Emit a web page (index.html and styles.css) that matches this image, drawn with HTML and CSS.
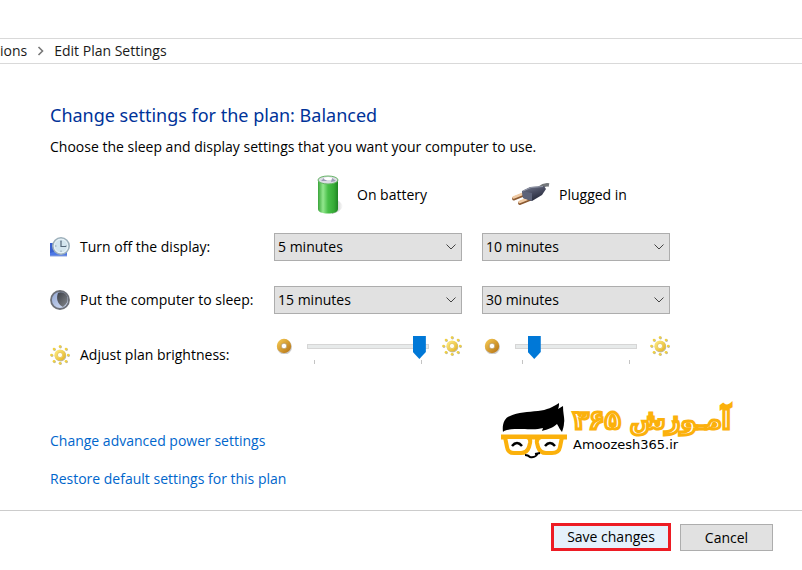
FILE: index.html
```html
<!DOCTYPE html>
<html lang="en">
<head>
  <meta charset="utf-8">
  <meta name="viewport" content="width=device-width, initial-scale=1">
  <title>Edit Plan Settings</title>
  <link rel="stylesheet" href="styles.css">
</head>
<body>

  <!-- shared drawings -->
  <svg class="defs" width="0" height="0" aria-hidden="true">
    <defs>
      <linearGradient id="gold" x1="0" y1="0" x2="1" y2="1">
        <stop offset="0" stop-color="#efc04c"/>
        <stop offset="1" stop-color="#bd7d1c"/>
      </linearGradient>
      <linearGradient id="yellow" x1="0" y1="0" x2="1" y2="1">
        <stop offset="0" stop-color="#fff08c"/>
        <stop offset="1" stop-color="#e3b01c"/>
      </linearGradient>
      <symbol id="dim" viewBox="0 0 16 16">
        <circle cx="8.5" cy="9" r="5.5" fill="none" stroke="#ccc" stroke-width="4"/>
        <circle cx="8" cy="8" r="5" fill="#fff" stroke="url(#gold)" stroke-width="4.4"/>
        <circle cx="8" cy="8" r="2.8" fill="#fff" stroke="#a8823c" stroke-width=".7"/>
      </symbol>
      <symbol id="sun" viewBox="0 0 20 20">
        <g fill="#b9b5a6">
          <circle cx="10.500" cy="2" r="1.400"/><circle cx="10.500" cy="18.600" r="1.400"/>
          <circle cx="2" cy="10.600" r="1.400"/><circle cx="18.600" cy="10.600" r="1.400"/>
          <circle cx="4.500" cy="4.600" r="1.400"/><circle cx="16.600" cy="4.600" r="1.400"/>
          <circle cx="4.500" cy="16.800" r="1.400"/><circle cx="16.600" cy="16.800" r="1.400"/>
        </g>
        <g fill="#f0d040">
          <circle cx="10" cy="1.500" r="1.300"/><circle cx="10" cy="18.200" r="1.300"/>
          <circle cx="1.500" cy="10" r="1.300"/><circle cx="18.200" cy="10" r="1.300"/>
          <circle cx="4" cy="4" r="1.300"/><circle cx="16" cy="4" r="1.300"/>
          <circle cx="4" cy="16.200" r="1.300"/><circle cx="16" cy="16.200" r="1.300"/>
        </g>
        <circle cx="10.500" cy="10.700" r="5.800" fill="#bfb9a4"/>
        <circle cx="10" cy="10" r="5.600" fill="url(#yellow)"/>
        <circle cx="10" cy="10" r="2.600" fill="#fffef4" stroke="#e2c258" stroke-width=".8"/>
      </symbol>
    </defs>
  </svg>

  <nav class="breadcrumb">
    <a href="#" class="crumb crumb-parent">ions</a>
    <svg class="crumb-arrow" width="7" height="10" viewBox="0 0 7 10"><path d="M1.5 1l4 4-4 4" fill="none" stroke="#777" stroke-width="1.6"/></svg>
    <span class="crumb">Edit Plan Settings</span>
  </nav>

  <main>
    <h1>Change settings for the plan: Balanced</h1>
    <p class="intro">Choose the sleep and display settings that you want your computer to use.</p>

    <form class="plan" id="plan">
      <div class="source source-battery">
        <svg width="32" height="40" viewBox="0 0 32 40">
          <defs>
            <linearGradient id="cell" x1="0" x2="1">
              <stop offset="0" stop-color="#3aa53a"/>
              <stop offset=".25" stop-color="#93e78e"/>
              <stop offset=".5" stop-color="#48bf48"/>
              <stop offset=".8" stop-color="#35aa35"/>
              <stop offset="1" stop-color="#1f8423"/>
            </linearGradient>
            <linearGradient id="shade" x1="0" x2="1">
              <stop offset="0" stop-color="#aaa"/>
              <stop offset="1" stop-color="#fff"/>
            </linearGradient>
          </defs>
          <path d="M20 24q7 2 9 7-1 5-11 8z" fill="url(#shade)"/>
          <path d="M4 5v29c0 3 4 4.500 10 4.500s10-1.500 10-4.500V5z" fill="url(#cell)"/>
          <ellipse cx="14" cy="5" rx="10" ry="4" fill="#dcdce4" stroke="#66b566"/>
          <path d="M7 6l3-3 3 3zM17 7l1-4 4 3z" fill="#9c9cb6"/>
          <ellipse cx="14" cy="3.500" rx="4" ry="1.500" fill="#fff"/>
        </svg>
        <span>On battery</span>
      </div>
      <div class="source source-plug">
        <svg width="40" height="24" viewBox="0 0 40 24">
          <defs>
            <linearGradient id="plug" x1="0" y1="0" x2=".5" y2="1">
              <stop offset="0" stop-color="#7c8294"/>
              <stop offset=".5" stop-color="#4a4e63"/>
              <stop offset="1" stop-color="#262a3b"/>
            </linearGradient>
          </defs>
          <path d="M28 5q5-4 10-3" fill="none" stroke="#73777a" stroke-width="3.500"/>
          <path d="M3 15.500l10-4M9 20l10-4" fill="none" stroke="#8b5a32" stroke-width="4" stroke-linecap="round"/>
          <path d="M2.500 14.500l10-4M8.500 19l10-4" fill="none" stroke="#f0cba5" stroke-width="2.500" stroke-linecap="round"/>
          <path d="M11 8l8-4 14-1 2 3-4 6-10 6-9-3z" fill="url(#plug)"/>
          <path d="M11 8l10 2v8l-9-3z" fill="#5d6379"/>
          <path d="M12 8l8-3.500 12-1" fill="none" stroke="#9398a8"/>
        </svg>
        <span>Plugged in</span>
      </div>

      <div class="setting">
        <svg width="20" height="20" viewBox="0 0 20 20">
          <path d="M0 6h17v13H0z" fill="#3a62d0"/>
          <path d="M0 16l17-5v8H0z" fill="#4d78e6"/>
          <path d="M0 19h17" stroke="#8fa5dd"/>
          <circle cx="11" cy="9" r="8.200" fill="#e6f1f6" stroke="#9db0bb" stroke-width="1.600"/>
          <circle cx="11" cy="9" r="6.200" fill="#d3e5ee"/>
          <path d="M11 3v1.500M11 13.500V15M5 9h1.500M15.500 9H17" stroke="#8aa0b0"/>
          <path d="M11 4v5.500h5" fill="none" stroke="#55687a" stroke-width="1.200"/>
        </svg>
        <span>Turn off the display:</span>
      </div>
      <select class="choice" aria-label="Turn off the display, on battery">
        <option>5 minutes</option>
        <option>10 minutes</option>
      </select>
      <select class="choice" aria-label="Turn off the display, plugged in">
        <option>10 minutes</option>
        <option>15 minutes</option>
      </select>

      <div class="setting">
        <svg width="20" height="20" viewBox="0 0 20 20">
          <defs>
            <linearGradient id="moon" x1="0" y1="0" x2="1" y2="1">
              <stop offset="0" stop-color="#8fa3cf"/>
              <stop offset="1" stop-color="#dbe5fa"/>
            </linearGradient>
            <linearGradient id="night" x1="0" y1="0" x2="1" y2="1">
              <stop offset="0" stop-color="#3c3f46"/>
              <stop offset="1" stop-color="#85888d"/>
            </linearGradient>
          </defs>
          <circle cx="10" cy="10" r="9" fill="url(#moon)" stroke="#6d7078" stroke-width="1.800"/>
          <path d="M8 3c3-1.500 7-.5 9 3 2 5-.5 8-4 11C7 14 6 8 8 3z" fill="url(#night)"/>
        </svg>
        <span>Put the computer to sleep:</span>
      </div>
      <select class="choice" aria-label="Put the computer to sleep, on battery">
        <option>15 minutes</option>
        <option>30 minutes</option>
      </select>
      <select class="choice" aria-label="Put the computer to sleep, plugged in">
        <option>30 minutes</option>
        <option>45 minutes</option>
      </select>

      <div class="setting">
        <svg width="20" height="20"><use href="#sun"/></svg>
        <span>Adjust plan brightness:</span>
      </div>
      <div class="brightness">
        <svg width="16" height="16"><use href="#dim"/></svg>
        <div class="slider">
          <input type="range" min="0" max="100" value="98" aria-label="Brightness on battery">
          <div class="ticks"><i></i><i></i></div>
        </div>
        <svg width="20" height="20"><use href="#sun"/></svg>
      </div>
      <div class="brightness">
        <svg width="16" height="16"><use href="#dim"/></svg>
        <div class="slider">
          <input type="range" min="0" max="100" value="11" aria-label="Brightness plugged in">
          <div class="ticks"><i></i><i></i></div>
        </div>
        <svg width="20" height="20"><use href="#sun"/></svg>
      </div>
    </form>

    <div class="extras">
      <div class="links">
        <a href="#">Change advanced power settings</a>
        <a href="#">Restore default settings for this plan</a>
      </div>
      <div class="brand">
        <svg width="66" height="56" viewBox="0 0 66 56">
          <path d="M2 29C1 22 3 15 9 13c8-4 18-4 28-5 9-1 15-4 21-8 0 2 0 4-1 6l5-3c0 8 2 13 1 17 0 3-1 6-2 9-2-2-3-5-5-8-4 4-9 5-15 7l1-3c-7 2-13 1-21 1-7 0-13 0-18 2z" fill="#000"/>
          <path d="M0 34h66" fill="none" stroke="#fbb10c" stroke-width="5"/>
          <path d="M4 34h22q4 1 3 6l-1 4q-2 6-8 6h-7q-6 0-7-6zM61 34H40q-5 1-4 6l1 4q2 6 8 6h6q7 0 8-6z" fill="#fff" stroke="#fbb10c" stroke-width="4" stroke-linejoin="round"/>
          <path d="M11 43q5-6 10 0M44 43q5-6 10 0" fill="none" stroke="#000" stroke-width="2.500"/>
          <path d="M24 52q3 0 5 2 6 1 8-4M34 51l5-1" fill="none" stroke="#000" stroke-width="2"/>
        </svg>
        <div class="brand-text">
          <span class="brand-name" lang="fa" dir="rtl">آمـوزش ۳۶۵</span>
          <span class="brand-site">Amoozesh365.ir</span>
        </div>
      </div>
    </div>
  </main>

  <footer>
    <button type="submit" form="plan" class="save">Save changes</button>
    <button type="button" class="cancel">Cancel</button>
  </footer>

</body>
</html>
```
FILE: styles.css
```css
* {
  box-sizing: border-box;
}
body {
  margin: 0;
  padding-top: 38px;
  background: #fff;
  color: #000;
  font: 14px/20px "Open Sans", "Noto Sans", sans-serif;
}
.defs {
  position: absolute;
}
.breadcrumb {
  display: flex;
  align-items: center;
  height: 26px;
  border-top: 1px solid #d9d9d9;
  border-bottom: 1px solid #d9d9d9;
}
.crumb {
  color: #1a1a1a;
  text-decoration: none;
  white-space: nowrap;
}
.crumb-parent {
  min-width: 25px;
}
.crumb-arrow {
  margin: 0 10px;
}
main {
  padding: 37px 50px 0;
}
h1 {
  margin: 0;
  font: 18px/28px "Noto Sans", sans-serif;
  color: #003399;
}
.intro {
  margin: 8px 0 0;
}
.plan {
  display: grid;
  grid-template-columns: 204px 188px 188px;
  grid-template-rows: 40px 64px 42px 68px;
  column-gap: 20px;
  align-items: center;
  margin-top: 18px;
}
.source {
  display: flex;
  align-items: center;
}
.source-battery {
  grid-column: 2;
  gap: 11px;
  padding-left: 40px;
}
.source-plug {
  gap: 8px;
  padding-left: 29px;
}
.setting {
  display: flex;
  align-items: center;
  gap: 10px;
  white-space: nowrap;
}
.choice {
  appearance: none;
  width: 100%;
  height: 28px;
  margin: 0;
  padding: 0 24px 0 3px;
  border: 1px solid #adadad;
  border-radius: 0;
  background: #e1e1e1 url("data:image/svg+xml,%3Csvg xmlns='http://www.w3.org/2000/svg' width='10' height='6'%3E%3Cpath d='M.5.5L5 5 9.500.5' fill='none' stroke='%23444'/%3E%3C/svg%3E") no-repeat right 5px center;
  color: #000;
  font: inherit;
}
.brightness {
  display: flex;
  align-items: center;
  align-self: start;
  gap: 13px;
  padding: 7px 0 0 2px;
}
.slider {
  flex: 1;
  padding: 7px 0 0 2px;
}
.slider input {
  appearance: none;
  display: block;
  width: 100%;
  height: 23px;
  margin: 0;
  background: transparent;
}
.slider input::-webkit-slider-runnable-track {
  height: 5px;
  border: 1px solid #d6d6d6;
  background: #e7eaea;
}
.slider input::-webkit-slider-thumb {
  appearance: none;
  width: 13px;
  height: 23px;
  margin-top: -9px;
  background: #0078d7;
  clip-path: polygon(0 0, 100% 0, 100% 70%, 50% 100%, 0 70%);
}
.ticks {
  display: flex;
  justify-content: space-between;
  padding: 2px 7px 0;
}
.ticks i {
  width: 1px;
  height: 4px;
  background: #c4c4c4;
}
.extras {
  display: grid;
  grid-template-columns: 451px auto;
  margin-top: 14px;
}
.links {
  display: flex;
  flex-direction: column;
  align-items: flex-start;
  gap: 18px;
  padding-top: 28px;
}
.links a {
  color: #0066cc;
  text-decoration: none;
}
.links a:hover {
  text-decoration: underline;
}
.brand {
  display: flex;
  gap: 6px;
}
.brand-text {
  display: flex;
  flex-direction: column;
}
.brand-name {
  color: #fff;
  font: bold 26px/34px "DejaVu Sans", sans-serif;
  white-space: nowrap;
  -webkit-text-stroke: 3px #fbb10c;
}
.brand-site {
  font: 13px/16px "DejaVu Sans", sans-serif;
}
footer {
  display: flex;
  justify-content: flex-end;
  align-items: flex-end;
  gap: 9px;
  margin-top: 21px;
  padding: 12px 29px 18px;
  border-top: 1px solid #ccc;
}
footer button {
  padding: 0;
  border: 1px solid #adadad;
  background: #e1e1e1;
  color: #000;
  font: inherit;
}
footer .save {
  width: 120px;
  height: 28px;
  border: 3px solid #ed1c24;
  background: #e5f1fb;
}
footer .cancel {
  width: 93px;
  height: 27px;
}
```
